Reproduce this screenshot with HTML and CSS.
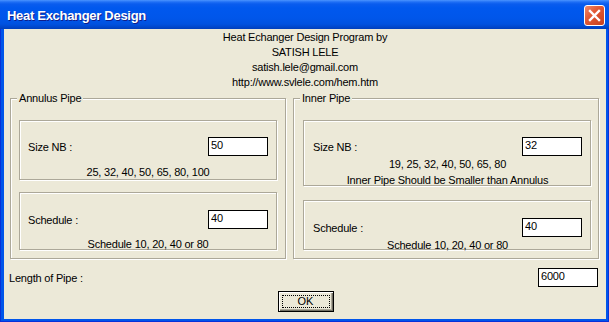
FILE: index.html
```html
<!DOCTYPE html>
<html lang="en">
<head>
  <meta charset="UTF-8" />
  <title>Heat Exchanger Design</title>
  <link rel="stylesheet" href="styles.css">
</head>
<body>

<div class="window">
  <div class="titlebar">
    <span class="title">Heat Exchanger Design</span>
    <button class="close" aria-label="Close">
      <svg width="21" height="21" viewBox="0 0 21 21">
        <path d="M6 6 L15 15 M15 6 L6 15" stroke="#fff" stroke-width="2.4" stroke-linecap="square" fill="none" />
      </svg>
    </button>
  </div>

  <div class="client">
    <div class="credits">
      <div>Heat Echanger Design Program by</div>
      <div>SATISH LELE</div>
      <div>satish.lele@gmail.com</div>
      <div>http://www.svlele.com/hem.htm</div>
    </div>

    <div class="groups">
      <div class="group group-annulus">
        <span class="group-label">Annulus Pipe</span>
        <div class="panel panel-size">
          <div class="field-row">
            <span>Size NB :</span>
            <input class="textbox" type="text" value="50" />
          </div>
          <div class="hint">25, 32, 40, 50, 65, 80, 100</div>
        </div>
        <div class="panel panel-schedule">
          <div class="field-row">
            <span>Schedule :</span>
            <input class="textbox" type="text" value="40" />
          </div>
          <div class="hint">Schedule 10, 20, 40 or 80</div>
        </div>
      </div>

      <div class="group group-inner">
        <span class="group-label">Inner Pipe</span>
        <div class="panel panel-size">
          <div class="field-row">
            <span>Size NB :</span>
            <input class="textbox" type="text" value="32" />
          </div>
          <div class="hint">19, 25, 32, 40, 50, 65, 80</div>
          <div class="hint">Inner Pipe Should be Smaller than Annulus</div>
        </div>
        <div class="panel panel-schedule">
          <div class="field-row">
            <span>Schedule :</span>
            <input class="textbox" type="text" value="40" />
          </div>
          <div class="hint">Schedule 10, 20, 40 or 80</div>
        </div>
      </div>
    </div>

    <div class="length-row">
      <span>Length of Pipe :</span>
      <input class="textbox" type="text" value="6000" />
    </div>

    <div class="actions">
      <button class="ok"><span class="focus">OK</span></button>
    </div>
  </div>
</div>

</body>
</html>
```

FILE: styles.css
```css
* {
  box-sizing: border-box;
}

body {
  margin: 0;
  font-family: 'Liberation Sans', Arial, sans-serif;
  font-size: 11px;
  letter-spacing: -0.2px;
  color: #000;
  background: #fff;
}

.window {
  width: 609px;
  height: 322px;
  display: flex;
  flex-direction: column;
  background: #0055ea;
  box-shadow: inset 1px 0 0 #0831d9, inset -1px 0 0 #0831d9, inset 0 -1px 0 #0831d9;
}

/* title bar */
.titlebar {
  height: 29px;
  display: flex;
  align-items: center;
  justify-content: space-between;
  padding: 0 4px 0 7px;
  background: linear-gradient(to bottom, #4a94ff 0px, #1f6ff5 2px, #0a5cee 4px, #0058ee 8px, #0056ea 18px, #0052e0 24px, #0047cc 27px, #003eba 29px);
}

.title {
  color: #fff;
  font-size: 13px;
  font-weight: bold;
  letter-spacing: -0.3px;
  text-shadow: 1px 1px 0 #0f1e8a;
  margin-top: 2px;
}

.close {
  width: 21px;
  height: 21px;
  padding: 0;
  margin-top: 2px;
  border: 1px solid #fff;
  border-radius: 3px;
  background: linear-gradient(135deg, #f08a6c 0%, #e25a36 40%, #c7401d 100%);
  display: flex;
  align-items: center;
  justify-content: center;
}

.close svg {
  display: block;
  margin: -1px;
}

/* client area */
.client {
  flex: 1;
  margin: 0 3px 3px 4px;
  background: #ece9d8;
  display: flex;
  flex-direction: column;
}

.credits {
  margin-top: 1px;
  text-align: center;
  line-height: 15px;
}

.groups {
  display: flex;
  gap: 7px;
  margin-top: 8px;
  padding-left: 6px;
}

.group,
.panel {
  border: 1px solid #aca899;
  box-shadow: inset 1px 1px 0 #fff, 1px 1px 0 #fff;
}

.group {
  position: relative;
  height: 161px;
  display: flex;
  flex-direction: column;
}

.group-annulus {
  width: 276px;
  padding: 21px 8px 8px 8px;
  gap: 12px;
}

.group-inner {
  width: 306px;
  padding: 21px 7px 8px 9px;
  gap: 14px;
}

.group-label {
  position: absolute;
  top: -7px;
  left: 6px;
  padding: 0 2px;
  line-height: 13px;
  background: #ece9d8;
}

.panel {
  display: flex;
  flex-direction: column;
  padding: 16px 8px 0 8px;
}

.group-annulus .panel-size {
  height: 60px;
}

.group-annulus .panel-size .hint {
  margin-top: 8px;
}

.group-annulus .panel-schedule {
  height: 58px;
  padding-top: 17px;
}

.group-annulus .panel-schedule .hint {
  margin-top: 7px;
}

.group-inner .panel {
  padding-left: 9px;
}

.group-inner .panel-size {
  height: 66px;
}

.group-inner .panel-schedule {
  height: 50px;
  padding-top: 17px;
}

.field-row {
  display: flex;
  align-items: center;
  justify-content: space-between;
  height: 19px;
  line-height: 16px;
}

.hint {
  text-align: center;
  line-height: 16px;
  white-space: nowrap;
}

.textbox {
  width: 60px;
  height: 19px;
  padding: 0 2px 4px 2px;
  border: 1px solid #000;
  border-radius: 0;
  background: #fff;
  font-family: inherit;
  font-size: 11px;
  letter-spacing: -0.2px;
  color: #000;
  outline: none;
}

/* bottom */
.length-row {
  display: flex;
  align-items: center;
  justify-content: space-between;
  margin-top: 9px;
  padding: 0 8px 0 5px;
  line-height: 16px;
}

.actions {
  display: flex;
  justify-content: center;
  margin-top: 4px;
  padding-left: 1px;
}

.ok {
  width: 56px;
  height: 21px;
  padding: 3px;
  border: 1px solid #000;
  border-radius: 0;
  background: #ece9d8;
  box-shadow: inset 1px 1px 0 #fff, inset -1px -1px 0 #716f64, inset -2px -2px 0 #aca899;
  font-family: inherit;
  font-size: 11px;
  color: #000;
  display: flex;
}

.ok .focus {
  flex: 1;
  border: 1px dotted #000;
  display: flex;
  align-items: center;
  justify-content: center;
  line-height: 11px;
}
```
